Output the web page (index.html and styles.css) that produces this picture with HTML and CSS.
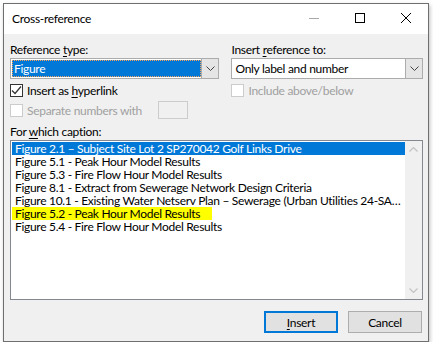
FILE: index.html
```html
<!DOCTYPE html>
<html lang="en">
<head>
    <meta charset="UTF-8">
    <title>Cross-reference</title>
    <link rel="stylesheet" href="styles.css">
</head>
<body>
    <div class="window">
        <div class="titlebar">
            <span class="title">Cross-reference</span>
            <div class="controls">
                <svg class="ctl" width="46" height="30" viewBox="0 0 46 30"><line x1="18" y1="14.5" x2="28" y2="14.5" stroke="#a8a8a8" stroke-width="1"/></svg>
                <svg class="ctl" width="46" height="30" viewBox="0 0 46 30"><rect x="18.5" y="9.5" width="9" height="9" fill="none" stroke="#000" stroke-width="1"/></svg>
                <svg class="ctl" width="46" height="30" viewBox="0 0 46 30"><path d="M18 9 L28 19 M28 9 L18 19" stroke="#000" stroke-width="1"/></svg>
            </div>
        </div>
        <div class="content">
            <div class="top">
                <div class="col left">
                    <div class="label">Reference <u>t</u>ype:</div>
                    <div class="combo">
                        <div class="field selected"><span class="focus">Figure</span></div>
                        <div class="arrow"><svg width="9" height="5" viewBox="0 0 9 5"><path d="M0.5 0.5 L4.5 4.5 L8.5 0.5" fill="none" stroke="#444" stroke-width="1"/></svg></div>
                    </div>
                    <div class="check">
                        <span class="box"><svg width="11" height="11" viewBox="0 0 11 11"><path d="M1 5.5 L4 8.5 L10 1.5" fill="none" stroke="#333" stroke-width="1.2"/></svg></span>
                        <span>Insert as <u>h</u>yperlink</span>
                    </div>
                    <div class="check disabled">
                        <span class="box"></span>
                        <span>Separate numbers with</span>
                        <span class="small-input"></span>
                    </div>
                </div>
                <div class="col right">
                    <div class="label">Insert <u>r</u>eference to:</div>
                    <div class="combo">
                        <div class="field">Only label and number</div>
                        <div class="arrow"><svg width="9" height="5" viewBox="0 0 9 5"><path d="M0.5 0.5 L4.5 4.5 L8.5 0.5" fill="none" stroke="#444" stroke-width="1"/></svg></div>
                    </div>
                    <div class="check disabled">
                        <span class="box"></span>
                        <span>Include above/below</span>
                    </div>
                </div>
            </div>
            <div class="label caption-label">For <u>w</u>hich caption:</div>
            <div class="listbox">
                <div class="items">
                    <div class="item active">Figure 2.1 – Subject Site Lot 2 SP270042 Golf Links Drive</div>
                    <div class="item">Figure 5.1 - Peak Hour Model Results</div>
                    <div class="item">Figure 5.3 - Fire Flow Hour Model Results</div>
                    <div class="item">Figure 8.1 - Extract from Sewerage Network Design Criteria</div>
                    <div class="item">Figure 10.1 - Existing Water Netserv Plan – Sewerage (Urban Utilities 24-SA0123 Sewer Network Plan)</div>
                    <div class="item"><span class="marker">Figure 5.2 - Peak Hour Model Results</span></div>
                    <div class="item">Figure 5.4 - Fire Flow Hour Model Results</div>
                </div>
                <div class="scrollbar">
                    <svg width="17" height="17" viewBox="0 0 17 17"><path d="M4.5 10.5 L8.5 6.5 L12.5 10.5" fill="none" stroke="#c2c2c2" stroke-width="1.2"/></svg>
                    <svg width="17" height="17" viewBox="0 0 17 17"><path d="M4.5 6.5 L8.5 10.5 L12.5 6.5" fill="none" stroke="#c2c2c2" stroke-width="1.2"/></svg>
                </div>
            </div>
            <div class="buttons">
                <button class="default"><u>I</u>nsert</button>
                <button>Cancel</button>
            </div>
        </div>
    </div>
</body>
</html>
```
FILE: styles.css
```css
body {
    margin: 0;
    padding: 3px 0 0 3px;
    background-color: #fff;
    font-family: Lato, "Noto Sans", sans-serif;
    font-size: 12px;
    letter-spacing: -0.3px;
    color: #000;
}

u {
    text-decoration-thickness: 1px;
    text-underline-offset: 2px;
}

.window {
    width: 424px;
    height: 337px;
    border: 1px solid #6f6f6f;
    background-color: #f0f0f0;
    box-shadow: 1px 2px 4px rgba(0, 0, 0, 0.25);
    display: flex;
    flex-direction: column;
}

.titlebar {
    height: 30px;
    flex: none;
    background-color: #fff;
    display: flex;
    align-items: center;
    justify-content: space-between;
}

.title {
    padding-left: 8px;
    padding-bottom: 1px;
}

.controls {
    display: flex;
    margin-right: -1px;
}

.ctl {
    display: block;
}

.content {
    flex: 1;
    padding: 8px 5px 0 6px;
    display: flex;
    flex-direction: column;
}

.top {
    display: flex;
    gap: 12px;
}

.col.left {
    width: 210px;
}

.col.right {
    width: 192px;
}

.label {
    height: 15px;
    line-height: 15px;
    margin-bottom: 1px;
}

.combo {
    height: 21px;
    box-sizing: border-box;
    border: 1px solid #acacac;
    background-color: #fff;
    display: flex;
}

.field {
    flex: 1;
    line-height: 19px;
    padding-left: 3px;
    white-space: nowrap;
    overflow: hidden;
}

.field.selected {
    margin: 1px 0 1px 1px;
    padding-left: 0;
    background-color: #0078d7;
    color: #fff;
    line-height: 15px;
    border: 1px dotted #f7a35c;
}

.focus {
    padding-left: 1px;
}

.arrow {
    width: 16px;
    background-color: #e5e5e5;
    border-left: 1px solid #acacac;
    display: flex;
    align-items: center;
    justify-content: center;
}

.check {
    display: flex;
    align-items: center;
    gap: 4px;
    height: 18px;
    margin-top: 2px;
}

.check .box {
    width: 11px;
    height: 11px;
    border: 1px solid #333;
    background-color: #fff;
    display: flex;
    align-items: center;
    justify-content: center;
}

.check.disabled {
    color: #a0a0a0;
}

.check.disabled .box {
    border-color: #cccccc;
}

.small-input {
    width: 28px;
    height: 16px;
    margin-left: 12px;
    border: 1px solid #cccccc;
    background-color: #f0f0f0;
}

.caption-label {
    margin-top: 5px;
}

.listbox {
    height: 160px;
    flex: none;
    box-sizing: border-box;
    border: 1px solid #828790;
    background-color: #fff;
    display: flex;
}

.items {
    flex: 1;
    min-width: 0;
    padding: 1px 0 0 1px;
}

.item {
    height: 13px;
    line-height: 13px;
    padding-left: 3px;
    white-space: nowrap;
    overflow: hidden;
    text-overflow: ellipsis;
}

.item.active {
    background-color: #0078d7;
    color: #fff;
}

.marker {
    display: inline-block;
    background-color: #ffff00;
    margin-left: -3px;
    padding: 0 12px 0 3px;
    line-height: 13px;
}

.scrollbar {
    width: 17px;
    background-color: #f0f0f0;
    display: flex;
    flex-direction: column;
    justify-content: space-between;
}

.scrollbar svg {
    display: block;
}

.buttons {
    display: flex;
    justify-content: flex-end;
    gap: 10px;
    margin-top: 11px;
    padding-right: 1px;
}

button {
    width: 74px;
    height: 22px;
    font-family: inherit;
    font-size: 12px;
    letter-spacing: -0.3px;
    color: #000;
    background-color: #e1e1e1;
    border: 1px solid #adadad;
    padding: 0;
}

button.default {
    border: 2px solid #0078d7;
}
```
